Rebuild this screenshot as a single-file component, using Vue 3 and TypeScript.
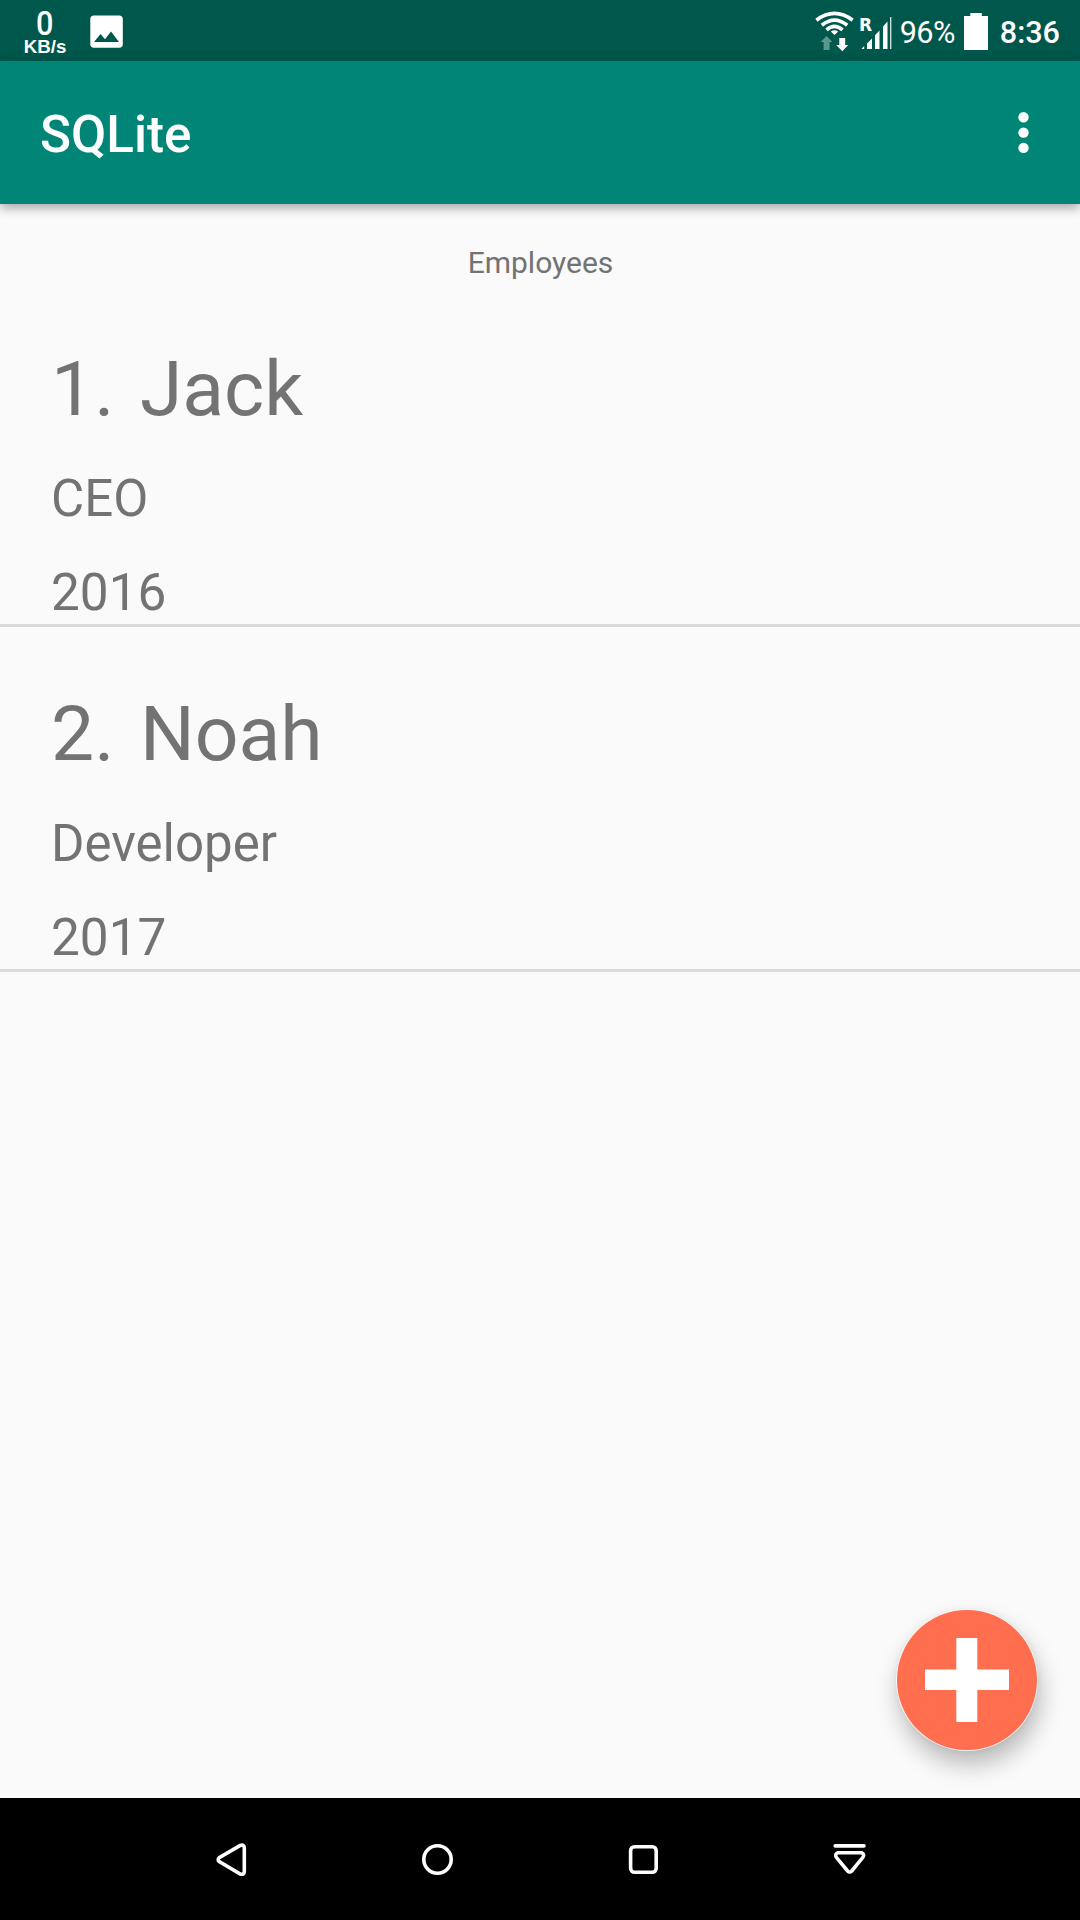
<script setup lang="ts">
interface Employee {
  id: number
  name: string
  role: string
  year: number
}

const employees: Employee[] = [
  { id: 1, name: 'Jack', role: 'CEO', year: 2016 },
  { id: 2, name: 'Noah', role: 'Developer', year: 2017 },
]
</script>

<template>
  <div class="screen">
    <header class="status">
      <div class="speed">
        <span class="speed-value">0</span>
        <span class="speed-unit">KB/s</span>
      </div>
      <svg class="picture" width="34" height="34" viewBox="0 0 34 34">
        <path fill="#fff" fill-rule="evenodd" d="M4 .5H29Q32.8.5 32.8 4V29Q32.8 32.8 29 32.8H4Q.3 32.8.3 29V4Q.3.5 4 .5ZM4 27H29L21 16.5 15 24.2 10.5 19Z" />
      </svg>
      <div class="status-right">
        <svg class="wifi" width="40" height="41" viewBox="0 0 40 41">
          <g fill="none" stroke="#fff" stroke-width="3.7">
            <path d="M1.4 9.2Q19.5-4.3 37.6 9.2" />
            <path d="M6.8 14.2Q19.5 4 32.2 14.2" />
            <path d="M11.5 18.8Q19.5 12 27.5 18.8" />
          </g>
          <path fill="#fff" d="M15.8 20.6Q19.5 17.8 23.2 20.6L19.5 24Z" />
          <path fill="#5a978d" d="M11.5 25 17.5 31H14.6V39H8.6V31H5.5Z" />
          <path fill="#fff" d="M27.3 40.2 21.2 34H24.3V27H30.2V34H33.3Z" />
        </svg>
        <svg class="signal" width="32" height="34" viewBox="0 0 32 34">
          <text x="-1" y="14" class="roaming">R</text>
          <path fill="#fff" d="M1.5 32 4.2 29V32ZM7 32V26.5L12 21.5V32ZM15 32V18.2L19.5 13.5V32ZM23 32V9.5L27.5 4.5V32ZM30.2 0H31.3V32H30.2Z" />
        </svg>
        <span class="percent">96%</span>
        <svg class="battery" width="24" height="37" viewBox="0 0 24 37">
          <path fill="#fff" d="M0 3H6.3V0H17.8V3H24V37H0Z" />
        </svg>
        <span class="clock">8:36</span>
      </div>
    </header>

    <div class="appbar">
      <h1>SQLite</h1>
      <svg width="12" height="42" viewBox="0 0 12 42" fill="#fff">
        <circle cx="5.5" cy="5.3" r="5.2" />
        <circle cx="5.5" cy="20.6" r="5.2" />
        <circle cx="5.5" cy="35.9" r="5.2" />
      </svg>
    </div>

    <main>
      <h2>Employees</h2>
      <ul>
        <li v-for="e in employees" :key="e.id">
          <div class="name"><span>{{ e.id }}.</span><span>{{ e.name }}</span></div>
          <div class="role">{{ e.role }}</div>
          <div class="year">{{ e.year }}</div>
        </li>
      </ul>
      <button class="fab" aria-label="Add">
        <svg width="84" height="84" viewBox="0 0 84 84"><path fill="#fff" d="M31.3 0H52.3V31.5H84V52H52.3V84H31.3V52H0V31.5H31.3Z" /></svg>
      </button>
    </main>

    <nav>
      <svg width="34" height="34" viewBox="0 0 34 34"><path d="M25.3 2.4 4.2 14.7Q2.1 16.8 4.2 18.6L25.3 31Q29.3 32 29.3 28.5V4.8Q29.3 1.3 25.3 2.4Z" /></svg>
      <svg width="34" height="34" viewBox="0 0 34 34"><circle cx="16.5" cy="16.5" r="13.7" /></svg>
      <svg width="34" height="34" viewBox="0 0 34 34"><rect x="3.6" y="3.7" width="25.6" height="25.6" rx="4" /></svg>
      <svg width="34" height="34" viewBox="0 0 34 34"><path d="M2.2 2.9H31" stroke-linecap="round" /><path d="M5 9.8H28.4Q32 11.1 29.9 14.3L18.8 28Q16.7 30.1 14.6 28L3.3 14.3Q1.4 11.1 5 9.8Z" /></svg>
    </nav>
  </div>
</template>

<style>
body { margin: 0; }
</style>

<style scoped>
.screen {
  width: 1080px;
  height: 1920px;
  display: flex;
  flex-direction: column;
  overflow: hidden;
  background: #fafafa;
  color: #737373;
  font-family: Roboto, "Liberation Sans", sans-serif;
}
.status {
  height: 61px;
  flex: none;
  display: flex;
  align-items: flex-start;
  background: #00574b;
  color: #fff;
}
.speed {
  width: 44px;
  margin-left: 23px;
  display: flex;
  flex-direction: column;
  align-items: center;
}
.speed-value { margin-top: 11px; font-size: 34px; line-height: 25px; font-weight: 500; transform: scaleX(0.9); }
.speed-unit { margin-top: 1px; font: bold 18.7px/19px "Liberation Sans", sans-serif; }
.picture { margin: 15px 0 0 23px; }
.status-right { display: flex; margin-left: auto; padding-right: 20px; }
.wifi { margin-top: 11px; }
.signal { margin: 17px 0 0 5px; overflow: visible; }
.roaming { font: bold 17px "DejaVu Sans", sans-serif; fill: #fff; }
.percent { margin: 13px 0 0 8px; width: 56px; font-size: 30.6px; line-height: 40px; letter-spacing: -0.6px; }
.battery { margin: 13px 0 0 8px; }
.clock { margin: 13px 0 0 12px; font-size: 30.6px; line-height: 40px; font-weight: 500; }
.appbar {
  height: 143px;
  flex: none;
  display: flex;
  align-items: center;
  justify-content: space-between;
  box-sizing: border-box;
  padding: 0 50px 0 40px;
  background: #008577;
  color: #fff;
  box-shadow: 0 4px 10px rgba(0, 0, 0, 0.34);
  z-index: 1;
}
h1 { margin: 5px 0 0; font-size: 51.2px; line-height: 60px; font-weight: 500; }
main { flex: 1; position: relative; }
h2 { margin: 0; padding: 41px 0 1px 1px; font-size: 30px; line-height: 36px; font-weight: 400; text-align: center; }
ul { margin: 0; padding: 0; list-style: none; }
li {
  height: 345px;
  box-sizing: border-box;
  padding: 62px 51px 0;
  border-bottom: 3px solid #dadada;
}
.name { display: flex; gap: 25.5px; font-size: 76.8px; line-height: 90px; }
.role, .year { font-size: 51px; line-height: 60px; }
.role { margin-top: 35px; }
.year { margin-top: 34px; font-size: 51.3px; }
.fab {
  position: absolute;
  left: 897px;
  top: 1406px;
  width: 140px;
  height: 140px;
  display: flex;
  align-items: center;
  justify-content: center;
  padding: 0;
  border: 0;
  border-radius: 50%;
  background: #ff6e4e;
  box-shadow: 0 0 0 1px rgba(250, 250, 250, 0.8), 3px 14px 24px rgba(0, 0, 0, 0.27), 0 0 8px rgba(0, 0, 0, 0.06);
}
nav {
  height: 122px;
  flex: none;
  display: flex;
  gap: 172px;
  align-items: center;
  box-sizing: border-box;
  padding: 1px 0 0 215px;
  background: #000;
}
nav svg { fill: none; stroke: #fff; stroke-width: 3.6; }
</style>
